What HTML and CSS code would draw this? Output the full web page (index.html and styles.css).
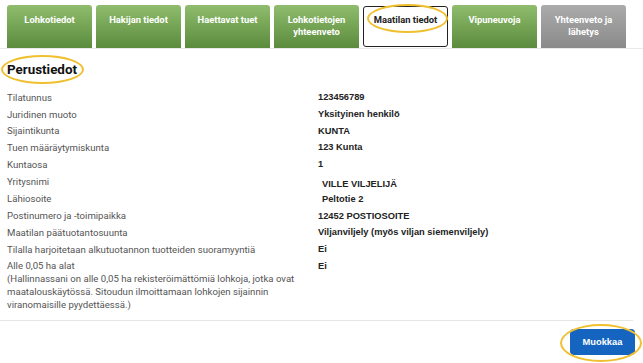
FILE: index.html
```html
<!DOCTYPE html>
<html lang="fi">
<head>
<meta charset="utf-8">
<title>Maatilan tiedot</title>
<link rel="stylesheet" href="styles.css">
</head>
<body>
<nav class="tabs">
  <div class="tab">Lohkotiedot</div>
  <div class="tab">Hakijan tiedot</div>
  <div class="tab">Haettavat tuet</div>
  <div class="tab">Lohkotietojen yhteenveto</div>
  <div class="tab active">Maatilan tiedot</div>
  <div class="tab">Vipuneuvoja</div>
  <div class="tab disabled">Yhteenveto ja lähetys</div>
</nav>
<main class="content">
  <h1 class="title">Perustiedot</h1>
  <div class="rows">
    <div class="label">Tilatunnus</div><div class="value">123456789</div>
    <div class="label">Juridinen muoto</div><div class="value">Yksityinen henkilö</div>
    <div class="label">Sijaintikunta</div><div class="value">KUNTA</div>
    <div class="label">Tuen määräytymiskunta</div><div class="value">123 Kunta</div>
    <div class="label">Kuntaosa</div><div class="value">1</div>
    <div class="label tall">Yritysnimi</div><div class="value tall indent low">VILLE VILJELIJÄ</div>
    <div class="label">Lähiosoite</div><div class="value indent">Peltotie 2</div>
    <div class="label">Postinumero ja -toimipaikka</div><div class="value">12452 POSTIOSOITE</div>
    <div class="label">Maatilan päätuotantosuunta</div><div class="value">Viljanviljely (myös viljan siemenviljely)</div>
    <div class="label">Tilalla harjoitetaan alkutuotannon tuotteiden suoramyyntiä</div><div class="value">Ei</div>
    <div class="label">Alle 0,05 ha alat<br>(Hallinnassani on alle 0,05 ha rekisteröimättömiä lohkoja, jotka ovat maatalouskäytössä. Sitoudun ilmoittamaan lohkojen sijainnin viranomaisille pyydettäessä.)</div><div class="value">Ei</div>
  </div>
  <div class="actions">
    <button class="btn">Muokkaa</button>
  </div>
</main>
<span class="mark mark-title"></span>
<span class="mark mark-tab"></span>
<span class="mark mark-btn"></span>
</body>
</html>
```
FILE: styles.css
```css
* { box-sizing: border-box; }
body {
  margin: 0;
  background: #fff;
  font-family: Roboto, "Liberation Sans", Arial, sans-serif;
  position: relative;
  width: 643px;
  height: 363px;
  overflow: hidden;
}
.tabs {
  display: flex;
  gap: 4px;
  padding: 5px 0 0 7px;
  height: 49px;
  border-bottom: 1px solid #e8e8e8;
}
.tab {
  width: 85px;
  height: 43px;
  padding: 9px 4px 0;
  border-radius: 3px 3px 0 0;
  background: linear-gradient(#8fbd6d, #5b8b3d);
  color: #fff;
  font-weight: 700;
  font-size: 9.4px;
  line-height: 12px;
  text-align: center;
}
.tab.active {
  margin-top: 1px;
  height: 41px;
  background: #fff;
  color: #222;
  border: 1px solid #222;
  border-radius: 3px;
  padding-top: 7px;
}
.tab.disabled {
  background: linear-gradient(#ababab, #8a8a8a);
}
.content {
  padding: 0 10px 0 0;
}
.title {
  margin: 12px 0 0 7px;
  font-size: 13.4px;
  line-height: 18px;
  font-weight: 700;
  color: #111;
}
.rows {
  display: grid;
  grid-template-columns: 311px 1fr;
  margin: 10px 0 0 7px;
}
.label {
  color: #555;
  font-size: 9.6px;
  line-height: 13px;
  padding: 1.85px 12px 1.85px 0;
}
.value {
  font-family: "Liberation Sans", Arial, sans-serif;
  font-weight: 700;
  color: #222;
  font-size: 9.3px;
  line-height: 13px;
  padding: 2.35px 0 1.35px;
}
.tall { padding-top: 2.6px; padding-bottom: 2.6px; }
.value.low { padding-top: 5.2px; padding-bottom: 0; }
.indent { padding-left: 4px; }
.actions {
  margin-top: 7px;
  border-top: 1px solid #e6e6e6;
  display: flex;
  justify-content: flex-end;
  padding: 8px 0 0;
}
.btn {
  width: 65px;
  height: 26px;
  margin-right: -2px;
  border: none;
  border-radius: 4px;
  background: #1565c0;
  color: #fff;
  font-family: "Liberation Sans", Arial, sans-serif;
  font-weight: 700;
  font-size: 9.3px;
}
.mark {
  position: absolute;
  border: 2.5px solid #f0c030;
  border-radius: 50%;
}
.mark-title { left: 1px; top: 55px; width: 83px; height: 29px; }
.mark-tab { left: 367px; top: 4px; width: 81px; height: 29px; }
.mark-btn { left: 560px; top: 324px; width: 82px; height: 38px; }
```
